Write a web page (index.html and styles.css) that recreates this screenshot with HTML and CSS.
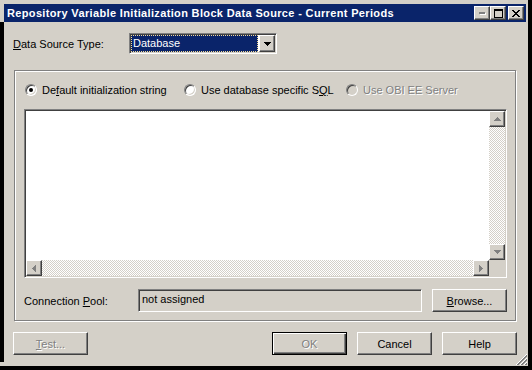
FILE: index.html
```html
<!DOCTYPE html>
<html lang="en">
<head>
    <meta charset="UTF-8">
    <title>Repository Variable Initialization Block Data Source</title>
    <link rel="stylesheet" href="styles.css">
</head>
<body>

    <div class="window">
        <div class="titlebar">
            <span class="title">Repository Variable Initialization Block Data Source - Current Periods</span>
            <div class="caption-buttons">
                <span class="cbtn">
                    <svg width="7" height="3" shape-rendering="crispEdges"><path d="M1 1h6v2H1z" fill="#fff"/><path d="M0 0h6v2H0z" fill="#808080"/></svg>
                </span>
                <span class="cbtn">
                    <svg width="9" height="9" shape-rendering="crispEdges"><path d="M0 0h9v2H0zM0 2h1v7H0zM8 2h1v7H8zM1 8h7v1H1z" fill="#000"/></svg>
                </span>
                <span class="cbtn close">
                    <svg width="8" height="7" shape-rendering="crispEdges"><path d="M0 0h2v1H0zM6 0h2v1H6zM1 1h2v1H1zM5 1h2v1H5zM2 2h4v1H2zM3 3h2v1H3zM2 4h4v1H2zM1 5h2v1H1zM5 5h2v1H5zM0 6h2v1H0zM6 6h2v1H6z" fill="#000"/></svg>
                </span>
            </div>
        </div>

        <div class="dialog">
            <div class="type-row">
                <span class="type-label"><u>D</u>ata Source Type:</span>
                <div class="combo">
                    <div class="combo-value">Database</div>
                    <span class="sbtn">
                        <svg width="7" height="4" shape-rendering="crispEdges"><path d="M0 0h7v1H0zM1 1h5v1H1zM2 2h3v1H2zM3 3h1v1H3z" fill="#000"/></svg>
                    </span>
                </div>
            </div>

            <div class="group">
                <div class="radios">
                    <label class="radio first"><span class="radio-box checked"></span><span>De<u>f</u>ault initialization string</span></label>
                    <label class="radio second"><span class="radio-box"></span><span>Use database specific S<u>Q</u>L</span></label>
                    <label class="radio disabled"><span class="radio-box"></span><span>Use OBI EE Server</span></label>
                </div>

                <div class="editor">
                    <div class="editor-text"></div>
                    <div class="vscroll">
                        <span class="sbtn">
                            <svg width="7" height="4" shape-rendering="crispEdges"><path d="M3 0h1v1H3zM2 1h3v1H2zM1 2h5v1H1zM0 3h7v1H0z" fill="#808080"/></svg>
                        </span>
                        <div class="track"></div>
                        <span class="sbtn">
                            <svg width="7" height="4" shape-rendering="crispEdges"><path d="M0 0h7v1H0zM1 1h5v1H1zM2 2h3v1H2zM3 3h1v1H3z" fill="#808080"/></svg>
                        </span>
                    </div>
                    <div class="hscroll">
                        <span class="sbtn">
                            <svg width="4" height="7" shape-rendering="crispEdges"><path d="M3 0h1v7H3zM2 1h1v5H2zM1 2h1v3H1zM0 3h1v1H0z" fill="#808080"/></svg>
                        </span>
                        <div class="track"></div>
                        <span class="sbtn">
                            <svg width="4" height="7" shape-rendering="crispEdges"><path d="M0 0h1v7H0zM1 1h1v5H1zM2 2h1v3H2zM3 3h1v1H3z" fill="#808080"/></svg>
                        </span>
                    </div>
                    <div class="corner"></div>
                </div>

                <div class="pool-row">
                    <span class="pool-label">Connection <u>P</u>ool:</span>
                    <div class="pool-field">not assigned</div>
                    <button class="btn browse"><u>B</u>rowse...</button>
                </div>
            </div>

            <div class="buttons">
                <button class="btn disabled"><u>T</u>est...</button>
                <button class="btn default disabled ok">OK</button>
                <button class="btn">Cancel</button>
                <button class="btn">Help</button>
            </div>
        </div>

        <svg class="grip" width="12" height="12" shape-rendering="crispEdges">
            <path d="M11 0L0 11M11 4L4 11M11 8L8 11" stroke="#fff"/>
            <path d="M11 1L1 11M11 2L2 11M11 5L5 11M11 6L6 11M11 9L9 11M11 10L10 11" stroke="#808080"/>
        </svg>
    </div>

</body>
</html>
```

FILE: styles.css
```css
body {
    margin: 0;
    font-family: "Liberation Sans", Arial, sans-serif;
    font-size: 11px;
    color: #000;
    background: #d4d0c8;
}
.window {
    position: relative;
    width: 532px;
    height: 370px;
    box-sizing: border-box;
    padding-top: 4px;
    background: #d4d0c8;
    border-right: 4px solid #000;
    border-bottom: 4px solid #000;
}
.titlebar {
    display: flex;
    align-items: center;
    justify-content: space-between;
    margin-left: 4px;
    width: 522px;
    height: 18px;
    box-sizing: border-box;
    padding: 0 2px 0 3px;
    background: #0a246a;
    color: #fff;
    font-weight: bold;
}
.title {
    white-space: nowrap;
    line-height: 18px;
    letter-spacing: 0.35px;
}
.caption-buttons {
    display: flex;
}
.cbtn, .sbtn {
    display: flex;
    align-items: center;
    justify-content: center;
    box-sizing: border-box;
    background: #d4d0c8;
    border: 1px solid;
    border-color: #fff #404040 #404040 #fff;
    box-shadow: inset -1px -1px #808080, inset 1px 1px #d4d0c8;
}
.cbtn {
    width: 16px;
    height: 14px;
}
.cbtn svg {
    margin-top: 1px;
}
.cbtn.close {
    margin-left: 2px;
}
.sbtn {
    width: 16px;
    height: 16px;
    flex: none;
}

.dialog {
    border-left: 4px solid #000;
    padding: 11px 0 0 9px;
    height: 340px;
    box-sizing: border-box;
}
.type-row {
    display: flex;
    align-items: center;
    height: 21px;
}
.type-label {
    width: 116px;
}
.combo {
    display: flex;
    width: 148px;
    height: 21px;
    box-sizing: border-box;
    background: #fff;
    border: 1px solid;
    border-color: #808080 #fff #fff #808080;
    box-shadow: inset 1px 1px #404040, inset -1px -1px #d4d0c8;
    padding: 1px;
}
.combo-value {
    flex: 1;
    margin-right: 1px;
    padding-left: 1px;
    line-height: 15px;
    background: #0a246a;
    color: #fff;
    border: 1px dotted #f5db95;
}
.combo .sbtn {
    height: 17px;
}

.group {
    margin: 16px 0 0 1px;
    width: 502px;
    height: 251px;
    box-sizing: border-box;
    border: 1px solid #808080;
    box-shadow: 1px 1px 0 #fff, inset 1px 1px 0 #fff;
    padding: 11px 0 8px 9px;
}
.radios {
    display: flex;
    align-items: center;
    height: 16px;
    margin: 0 0 11px 1px;
}
.radio {
    display: flex;
    align-items: center;
    gap: 5px;
}
.radio.first {
    width: 159px;
}
.radio.second {
    width: 162px;
}
.radio-box {
    display: flex;
    align-items: center;
    justify-content: center;
    width: 12px;
    height: 12px;
    box-sizing: border-box;
    border-radius: 50%;
    background: #fff;
    border: 1px solid;
    border-color: #808080 #fff #fff #808080;
    box-shadow: inset 1px 1px #404040, inset -1px -1px #d4d0c8;
}
.radio-box.checked::after {
    content: "";
    width: 4px;
    height: 4px;
    border-radius: 50%;
    background: #000;
}
.radio.disabled {
    color: #808080;
    text-shadow: 1px 1px #fff;
}
.radio.disabled .radio-box {
    background: #d4d0c8;
}

.editor {
    display: grid;
    grid-template-columns: 1fr 16px;
    grid-template-rows: 1fr 16px;
    width: 483px;
    height: 169px;
    box-sizing: border-box;
    background: #fff;
    border: 1px solid;
    border-color: #808080 #fff #fff #808080;
    box-shadow: inset 1px 1px #404040, inset -1px -1px #d4d0c8;
    padding: 1px;
}
.vscroll {
    display: flex;
    flex-direction: column;
}
.hscroll {
    display: flex;
}
.track {
    flex: 1;
    background: repeating-conic-gradient(#fff 0 25%, #d4d0c8 0 50%) 0 0 / 2px 2px;
}
.corner {
    background: #d4d0c8;
}

.pool-row {
    display: flex;
    align-items: center;
    margin-top: 11px;
    height: 23px;
}
.pool-label {
    width: 114px;
}
.pool-field {
    width: 284px;
    height: 23px;
    box-sizing: border-box;
    padding: 2px 0 0 3px;
    line-height: 14px;
    border: 1px solid;
    border-color: #808080 #fff #fff #808080;
    box-shadow: inset 1px 1px #404040, inset -1px -1px #d4d0c8;
}
.btn {
    width: 75px;
    height: 23px;
    padding: 0;
    font: inherit;
    color: #000;
    background: #d4d0c8;
    border: 1px solid;
    border-color: #fff #404040 #404040 #fff;
    box-shadow: inset -1px -1px #808080, inset 1px 1px #d4d0c8;
}
.btn.browse {
    margin-left: 10px;
}
.btn.default {
    border-color: #000;
    box-shadow: inset 1px 1px #fff, inset -1px -1px #404040, inset -2px -2px #808080;
}
.btn.disabled {
    color: #808080;
    text-shadow: 1px 1px #fff;
}

.buttons {
    display: flex;
    gap: 10px;
    width: 504px;
    margin-top: 11px;
}
.buttons .ok {
    margin-left: auto;
}
.grip {
    position: absolute;
    right: 0;
    bottom: 0;
}
```
